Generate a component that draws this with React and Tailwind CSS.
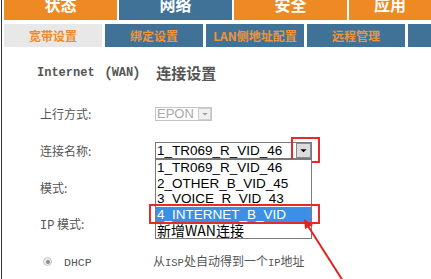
import React from "react";

const topTabs = [
  { label: "状态", cls: "bg-[#ee8a23]" },
  { label: "网络", cls: "bg-[#3f7296]" },
  { label: "安全", cls: "bg-[#ee8a23]" },
  { label: "应用", cls: "bg-[#ee8a23]" },
];

const subTabs = [
  { label: "宽带设置", active: true },
  { label: "绑定设置" },
  { label: "LAN侧地址配置" },
  { label: "远程管理" },
  { label: "" },
];

const options = [
  "1_TR069_R_VID_46",
  "2_OTHER_B_VID_45",
  "3_VOICE_R_VID_43",
  "4_INTERNET_B_VID",
  "新增WAN连接",
];

const cjk = "font-['Noto_Sans_CJK_SC',sans-serif]";
const mono = "[font-family:'Liberation_Mono',monospace]";
const arial = "font-['Liberation_Sans','Noto_Sans_CJK_SC',sans-serif]";

function Arrow({ className = "" }) {
  return (
    <svg viewBox="0 0 10 8" className={className}>
      <path d="M1.5 2.5 L5 6 L8.5 2.5 Z" fill="currentColor" />
    </svg>
  );
}

function Label({ children }) {
  return (
    <div className={`w-[115px] shrink-0 text-[12px] text-[#555] ${cjk}`}>{children}</div>
  );
}

export default function App() {
  return (
    <div className="relative w-[431px] h-[279px] overflow-hidden bg-white">
      <div className="ml-[1px] h-full border-l border-[#333] pl-[2px]">
        {/* top menu */}
        <div className="flex gap-[2px] h-[20px]">
          {topTabs.map((t, i) => (
            <div
              key={i}
              className={`${t.cls} ${i === 3 ? "flex-1" : "w-[113px]"} flex justify-center overflow-hidden`}
            >
              <span className={`-mt-[5px] leading-[18px] text-[16px] font-bold text-white ${cjk}`}>
                {t.label}
              </span>
            </div>
          ))}
        </div>

        {/* sub tabs */}
        <div className="flex gap-[3px] h-[23px] mt-[4px]">
          {subTabs.map((t, i) => (
            <div
              key={i}
              className={`${i === 4 ? "flex-1" : "w-[98px]"} ${
                t.active ? "bg-[#e8e8e8] text-[#ee8a2a]" : "bg-[#3f7296] text-[#f0943a]"
              } flex items-center justify-center text-[12px] font-bold ${cjk}`}
            >
              {t.label}
            </div>
          ))}
        </div>

        {/* content */}
        <div className="pl-[33px] pt-[13px]">
          <div className="h-[26px] flex items-center text-[#555] font-bold">
            <span className={`${mono} text-[12px]`}>Internet</span>
            <span className={`${cjk} text-[15px] ml-[2px]`}>（</span>
            <span className={`${mono} text-[12px]`}>WAN</span>
            <span className={`${cjk} text-[15px]`}>）</span>
            <span className={`${cjk} text-[15px] ml-[8px]`}>连接设置</span>
          </div>

          <div className="pl-[3px]">
            <div className="h-[37px] flex items-center mt-[9px]">
              <Label>上行方式:</Label>
              <div className="flex items-center h-[14px] w-[57px] border border-[#c4c4c4] bg-white">
                <span className={`${arial} flex-1 pl-[1px] text-[13px] leading-none text-[#a8a8a8]`}>
                  EPON
                </span>
                <div className="w-[13px] h-[12px] bg-[#f0f0f0] border border-[#d0d0d0] flex items-center justify-center text-[#9a9a9a]">
                  <Arrow className="w-[8px] h-[6px]" />
                </div>
              </div>
            </div>

            <div className="h-[37px] flex items-center">
              <Label>连接名称:</Label>
              <div className="relative flex items-center h-[17px] w-[157px] border border-[#7a7a7a] bg-white">
                <span className={`${arial} flex-1 pl-[1px] text-[13.5px] leading-none text-black`}>
                  1_TR069_R_VID_46
                </span>
                <div className="w-[15px] h-[15px] bg-[#dcdcdc] border border-[#8a8a8a] flex items-center justify-center text-black">
                  <Arrow className="w-[9px] h-[7px]" />
                </div>
                <div className="absolute right-[-9px] top-[-6px] w-[29px] h-[26px] border-2 border-[#e52a2a]" />

                {/* open list */}
                <div className="absolute left-[-1px] top-[16px] w-[157px] border border-[#7a7a7a] bg-white z-10">
                  {options.map((o, i) => (
                    <div
                      key={i}
                      className={`h-[15.5px] flex items-center pl-[1px] text-[13.5px] leading-none ${
                        i === 4 ? cjk + " text-[14px]" : arial
                      } ${i === 3 ? "bg-[#3c8fe6] text-white" : "text-black"}`}
                    >
                      {o}
                    </div>
                  ))}
                </div>
              </div>
            </div>

            <div className="h-[37px] flex items-center">
              <Label>模式:</Label>
            </div>

            <div className="h-[37px] flex items-center">
              <Label>
                <span className={`${mono} text-[12px]`}>IP</span> 模式:
              </Label>
            </div>

            <div className="h-[37px] flex items-center">
              <div className="w-[113px] shrink-0 flex items-center">
                <div className="ml-[3px] w-[9px] h-[9px] rounded-full border border-[#c8c8c8] bg-[#ececec] flex items-center justify-center">
                  <div className="w-[4px] h-[4px] rounded-full bg-[#8c8c8c]" />
                </div>
                <span className={`${mono} ml-[12px] mt-[3px] text-[11.5px] text-[#555]`}>DHCP</span>
              </div>
              <div className={`text-[12px] text-[#555] ${cjk}`}>
                从<span className={`${mono} text-[10.5px]`}>ISP</span>处自动得到一个
                <span className={`${mono} text-[10.5px]`}>IP</span>地址
              </div>
            </div>
          </div>
        </div>
      </div>

      {/* highlight box around selected option */}
      <div className="absolute left-[149px] top-[204px] w-[171px] h-[20px] border-2 border-[#e52a2a] z-20" />

      {/* red arrow */}
      <svg className="absolute inset-0 z-20 pointer-events-none" width="431" height="279">
        <line x1="343" y1="281" x2="308" y2="226" stroke="#e0241f" strokeWidth="2" />
        <path d="M304 219 L313 225 L305 229 Z" fill="#e0241f" />
      </svg>
    </div>
  );
}
